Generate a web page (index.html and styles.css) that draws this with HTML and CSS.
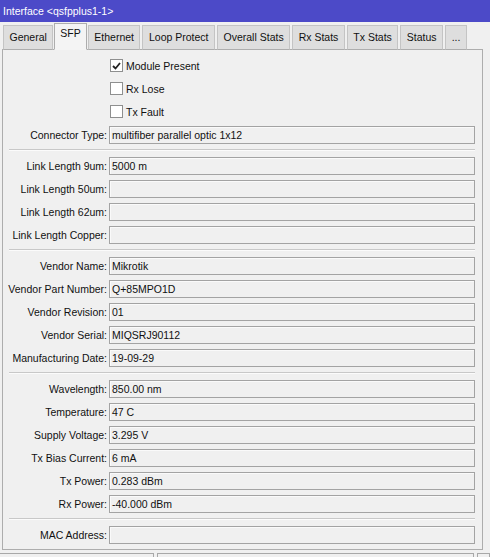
FILE: index.html
```html
<!DOCTYPE html>
<html lang="en">
<head>
  <meta charset="UTF-8">
  <title>Interface &lt;qsfpplus1-1&gt;</title>
  <link rel="stylesheet" href="styles.css">
</head>
<body>
  <div class="titlebar">Interface &lt;qsfpplus1-1&gt;</div>

  <div class="tabs">
    <span class="tab">General</span>
    <span class="tab active">SFP</span>
    <span class="tab">Ethernet</span>
    <span class="tab">Loop Protect</span>
    <span class="tab">Overall Stats</span>
    <span class="tab">Rx Stats</span>
    <span class="tab">Tx Stats</span>
    <span class="tab">Status</span>
    <span class="tab">...</span>
  </div>

  <div class="panel">
    <!-- module flags -->
    <div class="row">
      <span class="label"></span>
      <span class="check"><span class="box"><svg width="9" height="8" viewBox="0 0 9 8"><path d="M1 4 L3.5 6.5 L8 1" fill="none" stroke="#222" stroke-width="1.8"/></svg></span>Module Present</span>
    </div>
    <div class="row">
      <span class="label"></span>
      <span class="check"><span class="box"></span>Rx Lose</span>
    </div>
    <div class="row">
      <span class="label"></span>
      <span class="check"><span class="box"></span>Tx Fault</span>
    </div>
    <div class="row">
      <span class="label">Connector Type:</span>
      <span class="field">multifiber parallel optic 1x12</span>
    </div>

    <div class="sep"></div>

    <div class="row"><span class="label">Link Length 9um:</span><span class="field">5000 m</span></div>
    <div class="row"><span class="label">Link Length 50um:</span><span class="field"></span></div>
    <div class="row"><span class="label">Link Length 62um:</span><span class="field"></span></div>
    <div class="row"><span class="label">Link Length Copper:</span><span class="field"></span></div>

    <div class="sep"></div>

    <div class="row"><span class="label">Vendor Name:</span><span class="field">Mikrotik</span></div>
    <div class="row"><span class="label">Vendor Part Number:</span><span class="field">Q+85MPO1D</span></div>
    <div class="row"><span class="label">Vendor Revision:</span><span class="field">01</span></div>
    <div class="row"><span class="label">Vendor Serial:</span><span class="field">MIQSRJ90112</span></div>
    <div class="row"><span class="label">Manufacturing Date:</span><span class="field">19-09-29</span></div>

    <div class="sep"></div>

    <div class="row"><span class="label">Wavelength:</span><span class="field">850.00 nm</span></div>
    <div class="row"><span class="label">Temperature:</span><span class="field">47 C</span></div>
    <div class="row"><span class="label">Supply Voltage:</span><span class="field">3.295 V</span></div>
    <div class="row"><span class="label">Tx Bias Current:</span><span class="field">6 mA</span></div>
    <div class="row"><span class="label">Tx Power:</span><span class="field">0.283 dBm</span></div>
    <div class="row"><span class="label">Rx Power:</span><span class="field">-40.000 dBm</span></div>

    <div class="sep"></div>

    <div class="row"><span class="label">MAC Address:</span><span class="field"></span></div>
  </div>

  <div class="statusbar">
    <span class="cell first"></span>
    <span class="cell wide"></span>
    <span class="cell"></span>
  </div>
</body>
</html>
```

FILE: styles.css
```css
/* Base */
body {
  margin: 0;
  background: #f0f0f0;
  font-family: "Liberation Sans", Arial, sans-serif;
  font-size: 10.5px;
  color: #111;
  width: 490px;
  overflow: hidden;
}

.titlebar {
  height: 22px;
  box-sizing: border-box;
  padding: 3px 0 0 3px;
  line-height: 17px;
  background: #4c4ac8;
  color: #fff;
}

/* Tabs */
.tabs {
  display: flex;
  align-items: flex-end;
  gap: 2px;
  height: 28px;
  padding-left: 3px;
  margin-bottom: -1px;
  position: relative;
  z-index: 1;
}

.tab {
  height: 25px;
  box-sizing: border-box;
  padding: 0 5.5px;
  line-height: 23px;
  background: #dedede;
  border: 1px solid #c4c4c4;
  border-bottom: 1px solid #adadad;
}

.tab.active {
  height: 27px;
  line-height: 18px;
  background: #f4f4f4;
  border-color: #adadad;
  border-bottom-color: #f4f4f4;
  margin: 0 -1px;
  padding: 0 5px;
}

/* Form panel */
.panel {
  margin: 0 7px 0 2px;
  padding: 4px 7px 3px 0;
  border: 1px solid #adadad;
  background: #f0f0f0;
}

.row {
  display: flex;
  align-items: center;
  height: 23px;
}

.label {
  width: 104px;
  flex: none;
  text-align: right;
  margin-right: 2px;
  white-space: nowrap;
}

.field {
  flex: 1;
  height: 18px;
  box-sizing: border-box;
  padding-left: 2px;
  line-height: 16px;
  border: 1px solid #a3a3a3;
  box-shadow: inset 1px 1px 0 #fafafa;
  white-space: nowrap;
}

.check {
  display: flex;
  align-items: center;
  margin-left: 1px;
}

.check .box {
  width: 13px;
  height: 13px;
  box-sizing: border-box;
  margin-right: 3px;
  border: 1px solid #8e8f8f;
  background: #fff;
  display: flex;
  align-items: center;
  justify-content: center;
}

.sep {
  margin: 3px 0 3px 6px;
  border-top: 1px solid #c8c8c8;
  border-bottom: 1px solid #fbfbfb;
}

/* Status bar at the bottom edge */
.statusbar {
  display: flex;
  gap: 3px;
  margin-top: 3px;
}

.cell {
  height: 20px;
  border: 1px solid #a8a8a8;
  flex: 1;
}

.cell.first {
  flex: none;
  width: 153px;
  border-left: none;
}

.cell.wide {
  flex: none;
  width: 315px;
}
```
